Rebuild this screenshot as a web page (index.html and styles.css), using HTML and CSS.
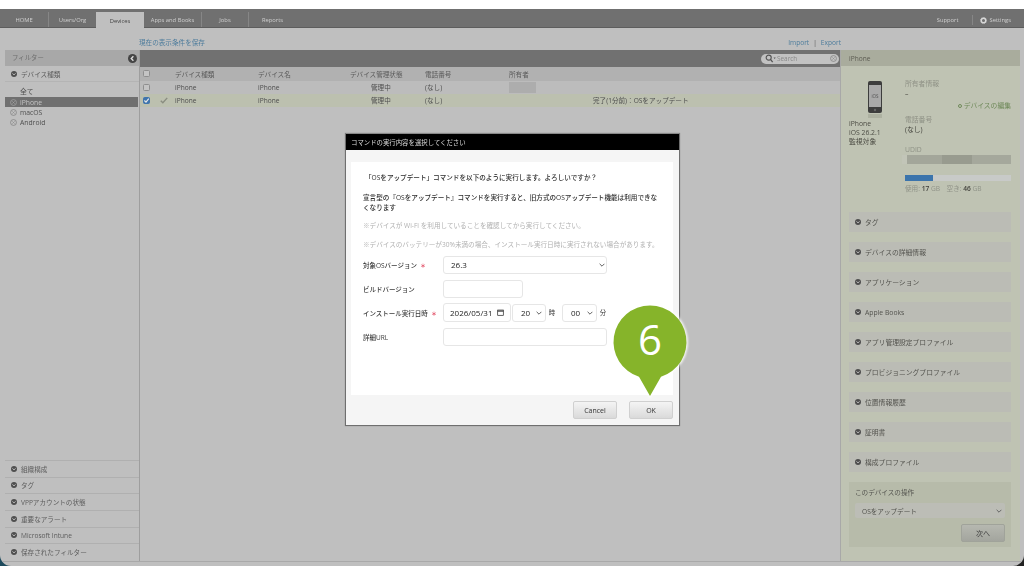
FILE: index.html
```html
<!DOCTYPE html>
<html lang="ja">
<head>
<meta charset="utf-8">
<title>Devices</title>
<link rel="stylesheet" href="styles.css">
</head>
<body>
<svg class="defs" width="0" height="0" aria-hidden="true">
  <symbol id="exp" viewBox="0 0 10 10"><circle cx="5" cy="5" r="5" fill="#4f4f4f"/><path d="M2.6 4 5 6.500 7.400 4" fill="none" stroke="#d0d0d0" stroke-width="1.500"/></symbol>
  <symbol id="x" viewBox="0 0 10 10"><circle cx="5" cy="5" r="4.200" fill="none" stroke="#7d7d7d" stroke-width="1"/><path d="M3.300 3.300 6.700 6.700M6.700 3.300 3.300 6.700" stroke="#8a8a8a" stroke-width=".9"/></symbol>
  <symbol id="xl" viewBox="0 0 10 10"><circle cx="5" cy="5" r="4.200" fill="none" stroke="#a8a8a8" stroke-width="1"/><path d="M3.300 3.300 6.700 6.700M6.700 3.300 3.300 6.700" stroke="#a8a8a8" stroke-width=".9"/></symbol>
  <symbol id="chev" viewBox="0 0 10 6"><path d="M1 1 5 5 9 1" fill="none" stroke="currentColor" stroke-width="1.400"/></symbol>
</svg>
<div class="frame">
<div class="window">
  <header class="tabs">
    <nav class="tablist">
      <span class="tab t-home">HOME</span>
      <span class="tab t-users">Users/Org</span>
      <span class="tab t-dev active">Devices</span>
      <span class="tab t-apps">Apps and Books</span>
      <span class="tab t-jobs">Jobs</span>
      <span class="tab t-rep">Reports</span>
    </nav>
    <div class="toplinks">
      <span>Support</span>
      <i class="vsep"></i>
      <svg class="gear" viewBox="0 0 10 10"><circle cx="5" cy="5" r="3.200" fill="none" stroke="#d8d8d8" stroke-width="2"/><circle cx="5" cy="5" r="4.400" fill="none" stroke="#d8d8d8" stroke-width="1" stroke-dasharray="1.300 1.100"/></svg>
      <span class="settings">Settings</span>
    </div>
  </header>
  <div class="subbar">
    <span class="save">現在の表示条件を保存</span>
    <span class="impexp"><span>Import</span><b>|</b><span>Export</span></span>
  </div>
  <main class="main">
    <aside class="filter">
      <div class="fhead"><span>フィルター</span><svg class="collapse" viewBox="0 0 10 10"><circle cx="5" cy="5" r="5" fill="#444"/><path d="M6 2.600 3.600 5 6 7.400" fill="none" stroke="#ddd" stroke-width="1.500"/></svg></div>
      <div class="fsec first"><svg class="ic"><use href="#exp"/></svg>デバイス種類</div>
      <ul class="flist">
        <li class="all">全て</li>
        <li class="sel"><svg class="ix"><use href="#xl"/></svg>iPhone</li>
        <li><svg class="ix"><use href="#x"/></svg>macOS</li>
        <li><svg class="ix"><use href="#x"/></svg>Android</li>
      </ul>
      <div class="fbottom">
        <div class="fsec"><svg class="ic"><use href="#exp"/></svg>組織構成</div>
        <div class="fsec"><svg class="ic"><use href="#exp"/></svg>タグ</div>
        <div class="fsec"><svg class="ic"><use href="#exp"/></svg>VPPアカウントの状態</div>
        <div class="fsec"><svg class="ic"><use href="#exp"/></svg>重要なアラート</div>
        <div class="fsec"><svg class="ic"><use href="#exp"/></svg>Microsoft Intune</div>
        <div class="fsec"><svg class="ic"><use href="#exp"/></svg>保存されたフィルター</div>
      </div>
    </aside>
    <section class="center">
      <div class="toolbar">
        <div class="search">
          <svg class="mag" viewBox="0 0 12 10"><circle cx="4" cy="4" r="2.800" fill="none" stroke="#555" stroke-width="1.300"/><path d="M6 6 8.400 9" stroke="#555" stroke-width="1.500"/><path d="M9.400 4h2.400l-1.200 1.600z" fill="#555"/></svg>
          <span>Search</span>
          <svg class="clear"><use href="#x"/></svg>
        </div>
      </div>
      <div class="row thead">
        <span><i class="cb"></i></span><span></span><span>デバイス種類</span><span>デバイス名</span><span>デバイス管理状態</span><span>電話番号</span><span>所有者</span><span></span>
      </div>
      <div class="row">
        <span><i class="cb"></i></span><span></span><span>iPhone</span><span>iPhone</span><span class="st">管理中</span><span>(なし)</span><span><i class="owner"></i></span><span></span>
      </div>
      <div class="row picked">
        <span><i class="cb on"><svg viewBox="0 0 8 8"><path d="M1.600 4 3.400 5.800 6.600 1.800" fill="none" stroke="#e8e8e8" stroke-width="1.400"/></svg></i></span>
        <span><svg class="tick" viewBox="0 0 9 8"><path d="M.8 4.200 3.200 6.600 8.200 1" fill="none" stroke="#8a8d80" stroke-width="1.600"/></svg></span>
        <span>iPhone</span><span>iPhone</span><span class="st">管理中</span><span>(なし)</span><span></span><span>完了(1分前)：OSをアップデート</span>
      </div>
    </section>
    <aside class="detail">
      <div class="dhead">iPhone</div>
      <div class="dinfo">
        <div class="dleft">
          <svg class="phone" viewBox="0 0 16 38">
            <rect x="1" y="0" width="14" height="32" rx="2" fill="#3d3d3d"/>
            <rect x="2" y="4" width="12" height="22" fill="#a9a9a9"/>
            <text x="8" y="17" font-size="4.500" text-anchor="middle" fill="#555" font-family="Open Sans">iOS</text>
            <circle cx="8" cy="29" r="1.200" fill="#666"/>
            <rect x="1" y="33" width="14" height="4" fill="#adb1a1"/>
          </svg>
          <p>iPhone<br>iOS 26.2.1<br>監視対象</p>
        </div>
        <div class="dright">
          <div class="lab">所有者情報</div>
          <div class="val">–</div>
          <div class="edit"><i></i>デバイスの編集</div>
          <div class="lab">電話番号</div>
          <div class="val">(なし)</div>
          <div class="lab l3">UDID</div>
          <div class="udid"></div>
          <div class="bar"><i></i></div>
          <div class="usage">使用: <b>17</b> GB　空き: <b>46</b> GB</div>
        </div>
      </div>
      <div class="acc"><svg class="ic"><use href="#exp"/></svg>タグ</div>
      <div class="acc"><svg class="ic"><use href="#exp"/></svg>デバイスの詳細情報</div>
      <div class="acc"><svg class="ic"><use href="#exp"/></svg>アプリケーション</div>
      <div class="acc"><svg class="ic"><use href="#exp"/></svg>Apple Books</div>
      <div class="acc"><svg class="ic"><use href="#exp"/></svg>アプリ管理設定プロファイル</div>
      <div class="acc"><svg class="ic"><use href="#exp"/></svg>プロビジョニングプロファイル</div>
      <div class="acc"><svg class="ic"><use href="#exp"/></svg>位置情報履歴</div>
      <div class="acc"><svg class="ic"><use href="#exp"/></svg>証明書</div>
      <div class="acc"><svg class="ic"><use href="#exp"/></svg>構成プロファイル</div>
      <div class="ops">
        <div class="opslab">このデバイスの操作</div>
        <div class="opssel"><span>OSをアップデート</span><svg class="chev"><use href="#chev"/></svg></div>
        <div class="opsfoot"><span class="nextbtn">次へ</span></div>
      </div>
    </aside>
  </main>
</div>
</div>

<div class="modal">
  <div class="mhead">コマンドの実行内容を選択してください</div>
  <div class="mbody">
    <div class="panel">
      <p class="q">「OSをアップデート」コマンドを以下のように実行します。よろしいですか？</p>
      <p class="warn">宣言型の『OSをアップデート』コマンドを実行すると、旧方式のOSアップデート機能は利用できなくなります</p>
      <p class="note n1">※デバイスが Wi-Fi を利用していることを確認してから実行してください。</p>
      <p class="note n2">※デバイスのバッテリーが30%未満の場合、インストール実行日時に実行されない場合があります。</p>
      <div class="form">
        <label>対象OSバージョン<em>＊</em></label>
        <div class="ctl"><div class="box wide sel26"><span>26.3</span><svg class="chev"><use href="#chev"/></svg></div></div>
        <label>ビルドバージョン</label>
        <div class="ctl"><div class="box build"></div></div>
        <label>インストール実行日時<em>＊</em></label>
        <div class="ctl">
          <div class="box date"><span>2026/05/31</span><svg class="cal" viewBox="0 0 10 10"><rect x="1" y="1.500" width="8" height="7.500" fill="none" stroke="#222" stroke-width="1"/><path d="M1 3h8" stroke="#222" stroke-width="1.400"/></svg></div>
          <div class="box mini"><span>20</span><svg class="chev"><use href="#chev"/></svg></div><span class="unit">時</span>
          <div class="box mini m2"><span>00</span><svg class="chev"><use href="#chev"/></svg></div><span class="unit">分</span>
        </div>
        <label>詳細URL</label>
        <div class="ctl"><div class="box wide"></div></div>
      </div>
    </div>
    <div class="mfoot"><span class="btn">Cancel</span><span class="btn">OK</span></div>
  </div>
</div>

<div class="callout">
  <svg viewBox="0 0 84 100" width="84" height="100">
    <path class="halo" d="M42 3a38 38 0 0 1 12 74L42 97 30 77A38 38 0 0 1 42 3z"/>
    <path class="pin" d="M42 4.500a36.500 36.500 0 0 1 11 71.300L42 95 31 75.800A36.500 36.500 0 0 1 42 4.500z"/>
  </svg>
  <span class="num">6</span>
</div>
</body>
</html>
```
FILE: styles.css
```css
* { box-sizing: border-box; }
html, body { margin: 0; height: 576px; overflow: hidden; background: #fff; }
body { position: relative; font-family: "Open Sans", "Noto Sans CJK JP", sans-serif; font-size: 7px; color: #4c4c4c; }
.defs { position: absolute; }
i, em { font-style: normal; }
p { margin: 0; }
ul { margin: 0; padding: 0; list-style: none; }

.frame {
  margin-top: 9px; height: 557px;
  background: linear-gradient(90deg, #1d4a5c 0 20px, #fff 20px 1000px, #222 1000px);
  filter: blur(.45px);
}
.window {
  height: 557px; background: #bfbfbf; border-radius: 0 0 11px 11px; overflow: hidden;
  display: flex; flex-direction: column;
}

.tabs { height: 19px; background: #707070; border-bottom: 1px solid #5d5d5d; display: flex; justify-content: space-between; color: #cfcfcf; flex: none; }
.tablist { display: flex; padding-top: 3px; }
.tab { display: flex; align-items: center; justify-content: center; font-size: 5.800px; height: 15px; padding-top: 1px; }
.t-home { width: 49px; border-right: 1px solid #868686; }
.t-users { width: 47px; }
.t-dev { width: 48px; }
.t-apps { width: 58px; border-right: 1px solid #868686; }
.t-jobs { width: 47px; border-right: 1px solid #868686; }
.t-rep { width: 47px; }
.active { background: #bfbfbf; color: #444; height: 16px; }
.toplinks { display: flex; align-items: center; font-size: 5.800px; padding-right: 13px; padding-top: 4px; }
.vsep { width: 1px; height: 10px; background: #868686; margin: 0 7px 0 13px; }
.gear { width: 7px; height: 7px; margin-right: 3px; }

.subbar { height: 22px; flex: none; display: flex; justify-content: space-between; align-items: flex-end; padding: 0 183px 3px 139px; color: #4d7c9c; font-size: 6.600px; }
.impexp { display: flex; gap: 4px; }
.impexp b { font-weight: 400; color: #555; }

.main { flex: none; height: 512px; display: grid; grid-template-columns: 135px 700px 180px; padding-left: 5px; border-bottom: 1px solid #a9a9a9; }

.filter { display: flex; flex-direction: column; border-right: 1px solid #9e9e9e; }
.fhead { height: 16px; background: #a8a8a8; color: #6e6e6e; display: flex; align-items: center; justify-content: space-between; padding: 0 2px 2px 7px; font-size: 6.400px; }
.collapse { width: 9px; height: 9px; margin-top: 2px; }
.fsec { height: 16.700px; display: flex; align-items: center; padding-left: 6px; gap: 4px; border-top: 1px solid #b0b0b0; color: #5c5c5c; font-size: 6.600px; }
.fsec.first { border-top: 0; border-bottom: 1px solid #b4b4b4; height: 16px; }
.ic { width: 6px; height: 6px; flex: none; }
.ix { width: 7px; height: 7px; flex: none; margin-right: 3px; }
.flist li { height: 10px; display: flex; align-items: center; padding-left: 5px; color: #4f4f4f; font-size: 6.800px; margin-right: 1px; }
.flist .all { padding-left: 15px; height: 15px; padding-top: 3px; }
.flist .sel { background: #707070; color: #c4c4c4; }
.fbottom { margin-top: auto; padding-bottom: 1px; }

.center { display: flex; flex-direction: column; min-width: 0; }
.toolbar { height: 17px; background: #717171; display: flex; justify-content: flex-end; align-items: center; padding-right: 1px; }
.search { width: 78px; height: 10px; border-radius: 5px; background: #c2c2c2; display: flex; align-items: center; padding: 0 2px 0 4px; color: #8a8a8a; font-size: 6.400px; }
.mag { width: 11px; height: 9px; margin-right: 1px; }
.clear { width: 7px; height: 7px; margin-left: auto; }
.row { display: grid; grid-template-columns: 20px 15px 83px 92px 75px 84px 84px 1fr; height: 13px; align-items: center; background: #bcbcbc; color: #4d4d4d; font-size: 6.600px; white-space: nowrap; }
.thead { background: #b1b1b1; height: 13.500px; color: #5a5a5a; }
.picked { background: #bcc0af; }
.row > span { display: flex; align-items: center; }
.st { padding-left: 21px; }
.cb { display: block; width: 7px; height: 7px; margin-left: 2.500px; border: 1px solid #8e8e8e; border-radius: 1.500px; background: #c4c4c4; }
.cb.on { background: #3f74ad; border-color: #3f74ad; }
.cb svg { display: block; width: 7px; height: 7px; margin: -1px; }
.tick { width: 8px; height: 7px; }
.owner { display: block; width: 27px; height: 11px; background: #adadad; }

.detail { background: #bfc3b3; border-left: 1px solid #a8a8a8; }
.dhead { height: 16px; background: #a9ac9d; color: #5c5c52; display: flex; align-items: center; padding-left: 8px; font-size: 6.600px; }
.dinfo { height: 146px; display: flex; padding-left: 8px; color: #4c4c44; }
.dleft { width: 56px; padding-top: 15px; font-size: 6.800px; line-height: 9px; }
.phone { display: block; width: 16px; height: 38px; margin: 0 0 0 18px; }
.dright { flex: 1; padding: 13px 9px 0 0; font-size: 6.800px; }
.lab { color: #8f9286; height: 10px; line-height: 10px; }
.val { height: 10px; line-height: 10px; color: #45453e; }
.edit { color: #6f8a5a; text-align: right; height: 16px; padding-top: 1px; line-height: 12px; }
.edit i { display: inline-block; width: 4px; height: 4px; border: 1px solid #6f8a5a; border-radius: 50%; margin-right: 2px; }
.l3 { margin-top: 10px; }
.udid { height: 9px; margin: 0 0 0 -3px; background: linear-gradient(90deg, #c2c5b8 0 5px, #a3a69a 5px 40px, #989b8f 40px 70px, #a5a89c 70px); }
.bar { height: 6px; margin-top: 11px; background: #c8cac8; }
.bar i { display: block; height: 6px; width: 28px; background: #3b74ac; }
.usage { color: #909388; margin-top: 2px; font-size: 6.600px; }
.usage b { font-weight: 600; color: #3f3f3a; }
.acc { height: 20px; margin: 0 9px 10px 8px; background: #bbbcb5; display: flex; align-items: center; gap: 4px; padding-left: 6px; color: #54544f; font-size: 6.800px; }
.ops { height: 65px; margin: 0 9px 0 8px; background: #b7bbaa; padding: 6px; }
.opslab { height: 15px; line-height: 9px; color: #54544f; font-size: 6.600px; }
.opssel { height: 15px; background: #bcbdb6; border-radius: 2px; display: flex; align-items: center; justify-content: space-between; padding: 0 3px 0 7px; color: #4f4f4a; font-size: 6.600px; }
.opsfoot { display: flex; justify-content: flex-end; margin-top: 6px; }
.nextbtn { width: 44px; height: 18px; border: 1px solid #a0a39a; border-radius: 2px; background: linear-gradient(#b6b8b0, #a3a59e); display: flex; align-items: center; justify-content: center; color: #3e3e3e; font-size: 7px; }
.chev { width: 6px; height: 4px; color: #555; flex: none; }

.modal { position: absolute; left: 345px; top: 133px; width: 335px; height: 293px; background: #f5f5f5; border: 1px solid #6f6f6f; border-top: 1px solid #888; box-shadow: 0 0 1px #888; filter: blur(.35px); display: flex; flex-direction: column; }
.mhead { height: 16px; background: #000; color: #dedede; font-size: 6.400px; display: flex; align-items: center; padding-left: 5px; flex: none; }
.mbody { flex: 1; padding: 12px 6px 6px 5px; display: flex; flex-direction: column; background: #f5f5f5; }
.panel { height: 233px; background: #fff; padding: 11px 11px 0 12px; color: #333; font-size: 6.600px; }
.q { padding-left: 2px; font-weight: 500; line-height: 10px; color: #2c2c2c; }
.warn { margin-top: 10px; font-weight: 500; line-height: 10px; color: #2c2c2c; }
.note { color: #b1b1b1; line-height: 10px; }
.n1 { margin-top: 8px; }
.n2 { margin-top: 9px; }
.form { display: grid; grid-template-columns: 80px 1fr; grid-auto-rows: 18px; row-gap: 6px; margin-top: 5.500px; align-items: center; }
.form label { font-size: 6.500px; font-weight: 500; color: #3a3a3a; white-space: nowrap; }
.form em { color: #e0405a; margin-left: 3px; font-size: 6px; }
.ctl { display: flex; align-items: center; height: 18px; }
.box { height: 18px; border: 1px solid #e6e6e6; border-radius: 3px; background: #fff; display: flex; align-items: center; justify-content: space-between; color: #222; font-size: 8px; }
.wide { width: 164px; }
.sel26 { padding: 0 1px 0 7px; }
.build { width: 80px; }
.date { width: 68px; padding: 0 6px; height: 19px; margin-right: 1px; font-size: 8px; }
.cal { width: 7px; height: 7px; }
.mini { width: 34px; padding: 0 3px 0 8px; }
.m2 { width: 35px; }
.unit { width: 12px; margin-right: 4px; text-align: center; font-size: 6.400px; color: #333; }
.mfoot { display: flex; justify-content: flex-end; gap: 12px; margin-top: 6px; }
.btn { width: 44px; height: 18px; border: 1px solid #d0d0d0; border-radius: 2px; background: linear-gradient(#f4f4f4, #dadada); display: flex; align-items: center; justify-content: center; color: #333; font-size: 7px; font-weight: 500; }
.sel26 .chev, .mini .chev { color: #444; }

.callout { position: absolute; left: 608px; top: 301px; width: 84px; height: 100px; }
.callout svg { display: block; }
.halo { fill: #fff; opacity: .9; filter: blur(1px); }
.pin { fill: #86b42a; }
.num { position: absolute; left: 0; right: 0; top: 12px; text-align: center; font-family: "Open Sans", sans-serif; font-size: 42px; line-height: 52px; color: #fff; }
```
